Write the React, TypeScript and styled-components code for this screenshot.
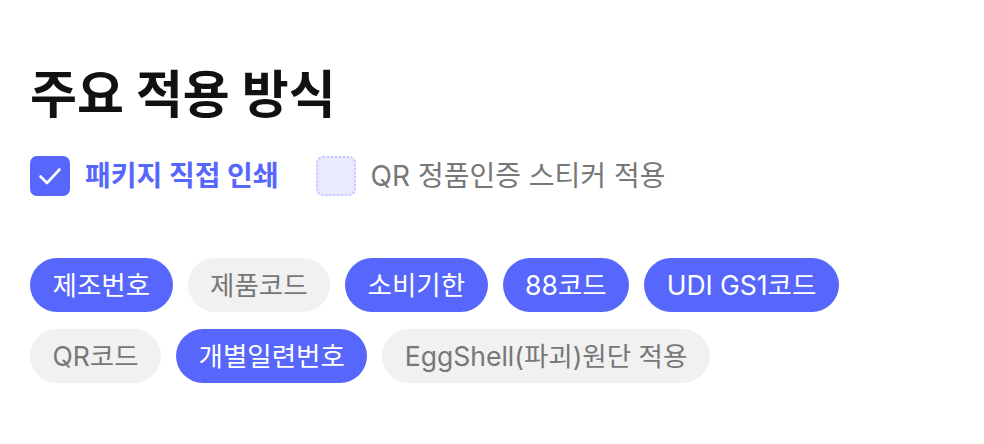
import React from "react";
import styled, { createGlobalStyle } from "styled-components";

const GlobalStyle = createGlobalStyle`
  html, body { margin: 0; padding: 0; background: #ffffff; }
  body { font-family: Inter, "Noto Sans CJK KR", sans-serif; }
`;

const BLUE = "#5767FB";

const Page = styled.div`
  padding: 64px 30px 0 30px;
  display: flex;
  flex-direction: column;
`;

const Title = styled.h2`
  margin: 0;
  font-size: 51px;
  font-weight: 700;
  color: #111111;
  line-height: 61px;
`;

const OptionRow = styled.div`
  display: flex;
  align-items: center;
  gap: 37px;
  margin-top: 31px;
`;

const Option = styled.label`
  display: flex;
  align-items: center;
  gap: 15px;
  cursor: pointer;
`;

const Box = styled.span<{ $checked: boolean }>`
  width: 40px;
  height: 40px;
  box-sizing: border-box;
  border-radius: 7px;
  display: flex;
  align-items: center;
  justify-content: center;
  background: ${(p) => (p.$checked ? BLUE : "#E9EAFF")};
  border: ${(p) => (p.$checked ? "none" : "2px dotted #C3C8FF")};
`;

const OptionText = styled.span<{ $checked: boolean }>`
  font-size: 28px;
  line-height: 40px;
  font-weight: ${(p) => (p.$checked ? 700 : 400)};
  color: ${(p) => (p.$checked ? BLUE : "#777777")};
`;

const Chips = styled.div`
  display: flex;
  flex-wrap: wrap;
  gap: 17px 15px;
  margin-top: 62px;
`;

const Chip = styled.span<{ $active: boolean }>`
  height: 54px;
  padding: 0 22.5px;
  box-sizing: border-box;
  border-radius: 27px;
  display: inline-flex;
  align-items: center;
  justify-content: center;
  font-size: 26.5px;
  line-height: 1;
  background: ${(p) => (p.$active ? BLUE : "#F1F1F1")};
  color: ${(p) => (p.$active ? "#ffffff" : "#777777")};
`;

const Check = () => (
  <svg width="26" height="26" viewBox="0 0 26 26" fill="none">
    <path d="M3.5 13.5l6.5 6.5L22.5 6.5" stroke="#fff" strokeWidth="2.6" strokeLinecap="round" strokeLinejoin="round" />
  </svg>
);

const chips: { label: string; active: boolean }[] = [
  { label: "제조번호", active: true },
  { label: "제품코드", active: false },
  { label: "소비기한", active: true },
  { label: "88코드", active: true },
  { label: "UDI GS1코드", active: true },
  { label: "QR코드", active: false },
  { label: "개별일련번호", active: true },
  { label: "EggShell(파괴)원단 적용", active: false },
];

export default function App() {
  return (
    <>
      <GlobalStyle />
      <Page>
        <Title>주요 적용 방식</Title>
        <OptionRow>
          <Option>
            <Box $checked>
              <Check />
            </Box>
            <OptionText $checked>패키지 직접 인쇄</OptionText>
          </Option>
          <Option>
            <Box $checked={false} />
            <OptionText $checked={false}>QR 정품인증 스티커 적용</OptionText>
          </Option>
        </OptionRow>
        <Chips>
          {chips.map((c) => (
            <Chip key={c.label} $active={c.active}>
              {c.label}
            </Chip>
          ))}
        </Chips>
      </Page>
    </>
  );
}
